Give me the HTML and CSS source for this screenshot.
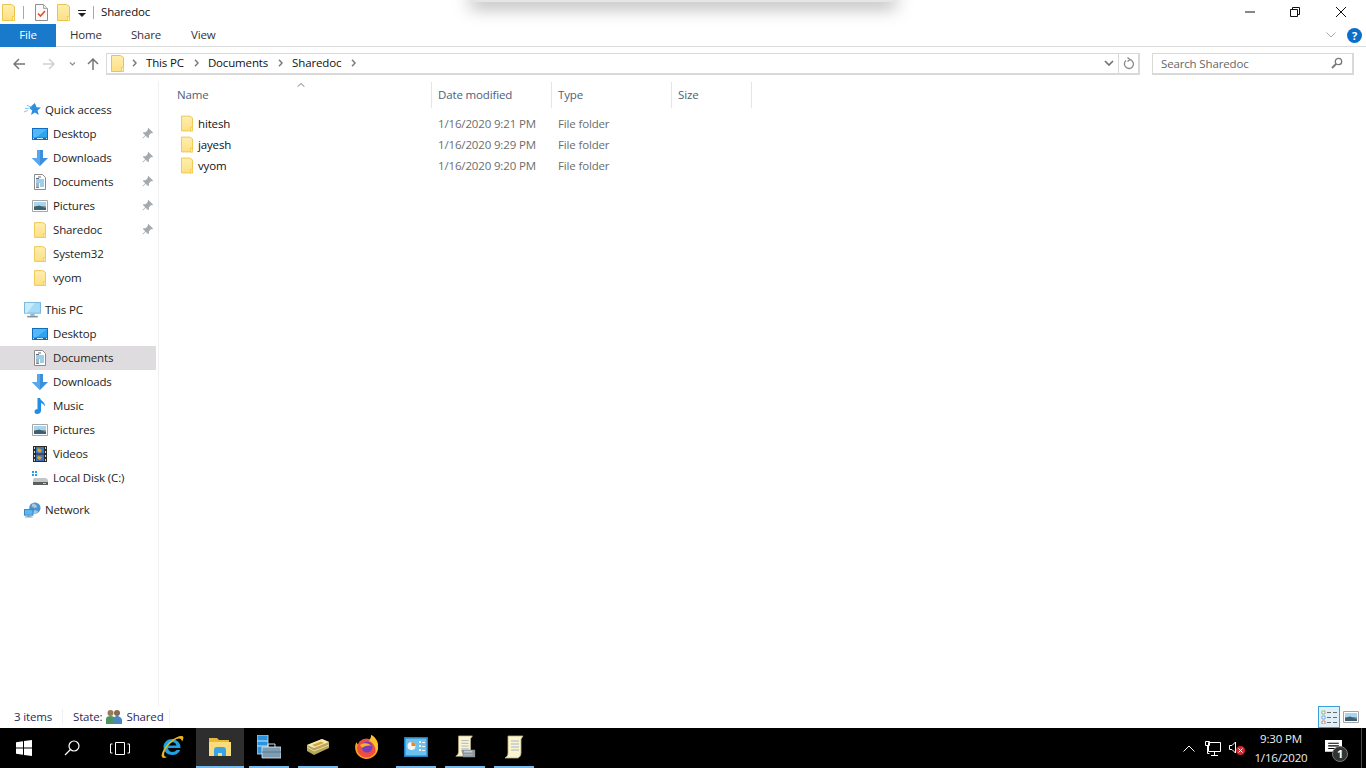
FILE: index.html
```html
<!DOCTYPE html>
<html lang="en">
<head>
    <meta charset="UTF-8">
    <title>Sharedoc</title>
    <link rel="stylesheet" href="styles.css">
</head>
<body>
    <svg class="defs" width="0" height="0">
        <defs>
            <linearGradient id="folderFill" x1="0" y1="0" x2="0" y2="1">
                <stop offset="0" stop-color="#ffeeb0"/>
                <stop offset="1" stop-color="#fde083"/>
            </linearGradient>
            <symbol id="folder" viewBox="0 0 13 17">
                <path d="M.5.5h9l3 2v14H.5z" fill="url(#folderFill)" stroke="#eac44f"/>
                <path d="M10 12h3v5h-3z" fill="#f4cd52"/>
                <path d="M11 13h1v3h-1z" fill="#fff2b8"/>
            </symbol>
            <symbol id="crumb" viewBox="0 0 5 8">
                <path d="M1 .8L4 4 1 7.200" fill="none" stroke="#7c7c7c" stroke-width="1.500"/>
            </symbol>
            <symbol id="star" viewBox="0 0 18 16">
                <path d="M11.500 .5l1.800 4.700 4.700.2-3.700 3 1.300 4.900-4.100-2.700-4.100 2.700 1.300-4.900-3.200-2.600z" fill="#2b8fe0"/>
                <path d="M3 3l5 2M1 6.500h4M0 10l4-1.500" stroke="#7cc0f2" fill="none"/>
            </symbol>
            <symbol id="desktop" viewBox="0 0 16 12">
                <path d="M0 0h16v12H0z" fill="#0f6cbf"/>
                <path d="M1 1h14v8.500H1z" fill="#2ea3f2"/>
                <path d="M1 1h14L4 9.500H1z" fill="#52b8f6"/>
                <path d="M1 10h1v1H1zM5 10h6v1H5zM14 10h1v1h-1z" fill="#d8effc"/>
            </symbol>
            <symbol id="download" viewBox="0 0 16 16">
                <path d="M5 0h6v8h5l-8 8-8-8h5z" fill="#3a8fdf"/>
                <path d="M5 0h3v16L0 8h5z" fill="#5aa8ec"/>
            </symbol>
            <symbol id="document" viewBox="0 0 12 16">
                <path d="M.5.500h8l3 3v12H.5z" fill="#fff" stroke="#8a8a8a"/>
                <path d="M2 6h8M2 8h8M6 10h4M6 12h4M2 13.500h3" stroke="#3f9ad8"/>
                <path d="M4 3h3M2 4.500h3M2 10h3M2 12h3" stroke="#5a6a78"/>
            </symbol>
            <symbol id="picture" viewBox="0 0 16 12">
                <path d="M.5.500h15v11H.5z" fill="#fff" stroke="#a6a6a6"/>
                <path d="M2 2h12v4H2z" fill="#a8d4f2"/>
                <path d="M2 6h12v4H2z" fill="#7e9f92"/>
                <path d="M2 7l5-1.500 7 2.500v2H2z" fill="#3d6172"/>
            </symbol>
            <symbol id="music" viewBox="0 0 11 16">
                <path d="M3 0h2.500c.5 3 5.500 4 5 8.500-1-2-2.500-3-4-3.500v8c0 2-2 3-4 3S0 15 0 13.500 1.500 11 3 11z" fill="#1f8ee6"/>
            </symbol>
            <symbol id="video" viewBox="0 0 14 16">
                <path d="M0 0h14v16H0z" fill="#2a2a2a"/>
                <path d="M1 1h1v2H1zM1 5h1v2H1zM1 9h1v2H1zM1 13h1v2H1zM12 1h1v2h-1zM12 5h1v2h-1zM12 9h1v2h-1zM12 13h1v2h-1z" fill="#d8d8d8"/>
                <path d="M3 1h8v6.500H3z" fill="#3d78b8"/>
                <path d="M3 8.500h8V15H3z" fill="#3e6fc0"/>
                <path d="M5 2l4 2-2 3-3-2zM5 10l4 1-2 3-3-2z" fill="#d9a32e"/>
            </symbol>
            <symbol id="disk" viewBox="0 0 16 14">
                <path d="M0 0h2v2H0zM3 0h2v2H3zM0 3h2v2H0zM3 3h2v2H3z" fill="#2b9cea"/>
                <path d="M2 7h12l2 2v5H1V9z" fill="#c2c6c6"/>
                <path d="M1 11h15v3H1z" fill="#5a5f5f"/>
                <path d="M11 12h3v1h-3z" fill="#a5e38a"/>
            </symbol>
            <symbol id="pc" viewBox="0 0 16 15">
                <path d="M0 0h16v11H0z" fill="#7bb8de"/>
                <path d="M1 1h14v9H1z" fill="#a4dcf8"/>
                <path d="M1 1h9L3 10H1z" fill="#c8ecfc"/>
                <path d="M6 11h4v2H6z" fill="#9eb4c2"/>
                <path d="M3 13h10v1.500H3z" fill="#7c94a4"/>
            </symbol>
            <symbol id="network" viewBox="0 0 18 16">
                <circle cx="11.500" cy="6" r="6" fill="#4b93cf"/>
                <path d="M9 1c3 0 5 2 5 4l-3 1-3-2zM9 11l2-3 4 1-2 3z" fill="#a7c7dd"/>
                <path d="M0 7h10v7H0z" fill="#2f86cf"/>
                <path d="M1 8h8v5H1z" fill="#5db6f2"/>
                <path d="M3 14h4v1h2v1H1v-1h2z" fill="#8aa2b2"/>
            </symbol>
            <symbol id="pin" viewBox="0 0 12 12">
                <path d="M7 0l5 5-1 1-1-.5L7.500 8 7.500 10.500 6.500 11 4 8.500 1 11.500.500 11 3.500 8 1 5.500 1.500 4.500 4 4.500 6.500 2 6 1z" fill="#a4a9ad"/>
            </symbol>
            <symbol id="taskdoc" viewBox="0 0 13 17">
                <path d="M.5.500h8l4 4v12H.5z" fill="#fafafa" stroke="#8e8e8e"/>
                <path d="M8.500.500v4h4" fill="#e6e6e6" stroke="#a8a8a8"/>
                <path d="M3 9.500l2.500 2.500 4.500-5" fill="none" stroke="#e2502a" stroke-width="1.600"/>
            </symbol>
            <symbol id="scroll" viewBox="0 0 20 24">
                <path d="M4 1h15l-2 3v14c0 2-1 4-3 5H1c2-1 3-3 3-5z" fill="#fbf4d0" stroke="#b8ae84" stroke-width=".8"/>
                <path d="M7 6h8M7 9h8M7 12h8M7 15h8" stroke="#a9b2c4"/>
            </symbol>
        </defs>
    </svg>

    <div class="shadow-window"></div>

    <div class="window">
        <div class="titlebar">
            <svg class="ic-folder qa-first"><use href="#folder"/></svg>
            <span class="qa-sep sep-a"></span>
            <svg class="ic-folder qa-check"><use href="#taskdoc"/></svg>
            <svg class="ic-folder qa-folder"><use href="#folder"/></svg>
            <svg class="qa-drop" viewBox="0 0 8 7"><path d="M0 0h8v1H0zM0 3h8L4 7z" fill="#222"/></svg>
            <span class="qa-sep sep-b"></span>
            <span class="title-text">Sharedoc</span>
            <div class="win-controls">
                <span class="win-btn"><svg viewBox="0 0 10 10"><path d="M0 5h10" stroke="#111"/></svg></span>
                <span class="win-btn"><svg viewBox="0 0 10 10"><path d="M.5 2.500h7v7h-7zM2.500 2.500v-2h7v7h-2" fill="none" stroke="#111"/></svg></span>
                <span class="win-btn"><svg viewBox="0 0 10 10"><path d="M0 0l10 10M10 0L0 10" stroke="#111"/></svg></span>
            </div>
        </div>

        <div class="tabs">
            <span class="tab tab-file">File</span>
            <span class="tab tab-home">Home</span>
            <span class="tab tab-share">Share</span>
            <span class="tab tab-view">View</span>
            <svg class="collapse" viewBox="0 0 10 6"><path d="M.5.500L5 5 9.500.500" fill="none" stroke="#a8a8a8"/></svg>
            <span class="help">?</span>
        </div>

        <div class="addressbar">
            <svg class="nav-arrow nav-back" viewBox="0 0 12 12"><path d="M6 1L1 6l5 5M1 6h11" fill="none" stroke="#767676" stroke-width="1.500"/></svg>
            <svg class="nav-arrow nav-forward" viewBox="0 0 12 12"><path d="M6 1l5 5-5 5M11 6H0" fill="none" stroke="#d0d0d0" stroke-width="1.500"/></svg>
            <svg class="nav-drop" viewBox="0 0 6 4"><path d="M.5.500L3 3 5.500.500" fill="none" stroke="#8c8c8c" stroke-width="1.200"/></svg>
            <svg class="nav-arrow nav-up" viewBox="0 0 12 12"><path d="M1 6l5-5 5 5M6 1v11" fill="none" stroke="#767676" stroke-width="1.500"/></svg>
            <div class="address-box">
                <svg class="ic-folder addr-folder"><use href="#folder"/></svg>
                <svg class="crumb-arrow"><use href="#crumb"/></svg><span class="crumb">This PC</span>
                <svg class="crumb-arrow"><use href="#crumb"/></svg><span class="crumb">Documents</span>
                <svg class="crumb-arrow"><use href="#crumb"/></svg><span class="crumb">Sharedoc</span>
                <svg class="crumb-arrow"><use href="#crumb"/></svg>
                <svg class="addr-drop" viewBox="0 0 10 6"><path d="M1 1l4 4 4-4" fill="none" stroke="#6f6f6f" stroke-width="1.600"/></svg>
                <span class="addr-refresh">
                    <svg viewBox="0 0 12 13"><path d="M3 3.500a4.500 4.500 0 1 0 3.500-1M4.500.5l2.500 2-2.500 2" fill="none" stroke="#8a8a8a" stroke-width="1.300"/></svg>
                </span>
            </div>
            <div class="search-box">
                <span>Search Sharedoc</span>
                <svg viewBox="0 0 12 12"><circle cx="7.500" cy="4.500" r="3.200" fill="none" stroke="#777" stroke-width="1.300"/><path d="M5 7l-4 4" stroke="#777" stroke-width="1.800"/></svg>
            </div>
        </div>

        <div class="content">
            <nav class="navpane">
                <div class="nav-row nav-top"><svg class="nav-ic ic-star"><use href="#star"/></svg>Quick access</div>
                <div class="nav-row"><svg class="nav-ic ic-wide"><use href="#desktop"/></svg>Desktop<svg class="pin"><use href="#pin"/></svg></div>
                <div class="nav-row"><svg class="nav-ic ic-wide"><use href="#download"/></svg>Downloads<svg class="pin"><use href="#pin"/></svg></div>
                <div class="nav-row"><svg class="nav-ic ic-doc"><use href="#document"/></svg>Documents<svg class="pin"><use href="#pin"/></svg></div>
                <div class="nav-row"><svg class="nav-ic ic-wide"><use href="#picture"/></svg>Pictures<svg class="pin"><use href="#pin"/></svg></div>
                <div class="nav-row"><svg class="nav-ic ic-navfolder"><use href="#folder"/></svg>Sharedoc<svg class="pin"><use href="#pin"/></svg></div>
                <div class="nav-row"><svg class="nav-ic ic-navfolder"><use href="#folder"/></svg>System32</div>
                <div class="nav-row"><svg class="nav-ic ic-navfolder"><use href="#folder"/></svg>vyom</div>

                <div class="nav-row nav-top nav-group"><svg class="nav-ic ic-star"><use href="#pc"/></svg>This PC</div>
                <div class="nav-row"><svg class="nav-ic ic-wide"><use href="#desktop"/></svg>Desktop</div>
                <div class="nav-row selected"><svg class="nav-ic ic-doc"><use href="#document"/></svg>Documents</div>
                <div class="nav-row"><svg class="nav-ic ic-wide"><use href="#download"/></svg>Downloads</div>
                <div class="nav-row"><svg class="nav-ic ic-wide"><use href="#music"/></svg>Music</div>
                <div class="nav-row"><svg class="nav-ic ic-wide"><use href="#picture"/></svg>Pictures</div>
                <div class="nav-row"><svg class="nav-ic ic-video"><use href="#video"/></svg>Videos</div>
                <div class="nav-row"><svg class="nav-ic ic-wide"><use href="#disk"/></svg>Local Disk (C:)</div>

                <div class="nav-row nav-top nav-group"><svg class="nav-ic ic-star"><use href="#network"/></svg>Network</div>
            </nav>

            <main class="filelist">
                <div class="list-head">
                    <span class="col-name">Name<svg class="sort-caret" viewBox="0 0 8 4"><path d="M.5 3.800L4 .5l3.500 3.300" fill="none" stroke="#7c7c7c"/></svg></span>
                    <span class="col-date">Date modified</span>
                    <span class="col-type">Type</span>
                    <span class="col-size">Size</span>
                </div>
                <div class="file-row">
                    <span class="file-name"><svg class="ic-folder"><use href="#folder"/></svg>hitesh</span>
                    <span class="file-date">1/16/2020 9:21 PM</span>
                    <span class="file-type">File folder</span>
                </div>
                <div class="file-row">
                    <span class="file-name"><svg class="ic-folder"><use href="#folder"/></svg>jayesh</span>
                    <span class="file-date">1/16/2020 9:29 PM</span>
                    <span class="file-type">File folder</span>
                </div>
                <div class="file-row">
                    <span class="file-name"><svg class="ic-folder"><use href="#folder"/></svg>vyom</span>
                    <span class="file-date">1/16/2020 9:20 PM</span>
                    <span class="file-type">File folder</span>
                </div>
            </main>
        </div>

        <div class="statusbar">
            <span class="status-count">3 items</span>
            <span class="status-state">State:
                <svg class="shared-ic" viewBox="0 0 18 15">
                    <circle cx="5.500" cy="4" r="3" fill="#9a7a5c"/><path d="M1 15V10c0-2 2-3 4.500-3S10 8 10 10v5z" fill="#4f9360"/>
                    <circle cx="12" cy="4" r="3" fill="#8a6a4c"/><path d="M8 15v-4c0-2 2-4 4-4s5 2 5 4v4z" fill="#4a86c0"/>
                </svg>
                Shared</span>
            <div class="view-btns">
                <span class="view-btn active">
                    <svg viewBox="0 0 16 14"><path d="M1 1h3v3H1z" fill="#fff" stroke="#7a9a5c" stroke-width=".7"/><path d="M1 6h3v3H1z" fill="#fff" stroke="#4a8ac8" stroke-width=".7"/><path d="M1 11h3v3H1z" fill="#fff" stroke="#d05040" stroke-width=".7"/><path d="M6 2.500h4M12 2.500h4M6 7.500h4M12 7.500h4M6 12.500h4M12 12.500h4" stroke="#6c6c6c"/></svg>
                </span>
                <span class="view-btn"><svg class="view-pic"><use href="#picture"/></svg></span>
            </div>
        </div>

        <footer class="taskbar">
            <span class="tb-sys"><svg class="start" viewBox="0 0 16 16"><path d="M0 2.300l7-1v6.300H0zM8 1.100L16 0v7.600H8zM0 8.400h7v6.300l-7-1zM8 8.400h8V16l-8-1.100z" fill="#fff"/></svg></span>
            <span class="tb-sys"><svg class="glass" viewBox="0 0 16 16"><circle cx="10" cy="6" r="5" fill="none" stroke="#fff" stroke-width="1.200"/><path d="M6.500 9.500L1 15" stroke="#fff" stroke-width="1.300"/></svg></span>
            <span class="tb-sys"><svg class="taskview" viewBox="0 0 20 13"><path d="M5.500.500h9v12h-9zM2.500 2H.5v9h2M17.500 2h2v9h-2" fill="none" stroke="#fff"/></svg></span>
            <span class="tb-app tb-ie">
                <svg viewBox="0 0 24 24">
                    <path d="M12 4a8.500 8.500 0 0 1 8.500 9H8c.3 2.500 2 4 4.500 4 1.800 0 3.200-.8 4-2h3.700c-1.200 3-4.200 5-7.700 5C7.500 20 3.500 16.500 3.500 12S7.500 4 12 4zM8 10.500h8.500C16 8.500 14.500 7.300 12.300 7.300S8.500 8.500 8 10.500z" fill="#1da3e2"/>
                    <path d="M2 22C.500 20 4 11 12 5c4-3 9-5 11-3.500 1 1 0 3.500-1 5-.5-2-1-3-3-3-3 0-7 3-11 7.500C4.500 15.500 3 20 5 21.500c1 .5 2 .5 3 0-2 1.500-5 2-6 .5z" fill="#e9b81f"/>
                </svg>
            </span>
            <span class="tb-app tb-explorer">
                <svg viewBox="0 0 22 20">
                    <path d="M0 1h8l2 2h10v3H0z" fill="#e6b93a"/>
                    <path d="M0 5h22v14H0z" fill="#fbdc7a"/>
                    <path d="M5 13c0-2 1-3 3-3h6c2 0 3 1 3 3v6h-4v-3H9v3H5z" fill="#3aa3e8"/>
                </svg>
            </span>
            <span class="tb-pin first-pin">
                <svg viewBox="0 0 24 24">
                    <path d="M0 0h11v19H0z" fill="#2a93e0" stroke="#cfe6f5" stroke-width=".8"/>
                    <path d="M0 6h11M0 11h11" stroke="#cfe6f5"/>
                    <path d="M5 12h19v11H5z" fill="#7d9db3" stroke="#e4edf2" stroke-width=".8"/>
                    <path d="M11 12V9h7v3" fill="none" stroke="#d4e2ea"/>
                    <path d="M5 17h19" stroke="#587688"/>
                </svg>
            </span>
            <span class="tb-pin">
                <svg viewBox="0 0 24 20">
                    <path d="M1 8L16 2l7 3v6L8 18l-7-4z" fill="#b7a55a"/>
                    <path d="M1 8L16 2l7 3L8 11z" fill="#f6eab0"/>
                    <path d="M6 8l9-3.500 3 1.500-9 3.500z" fill="#d9a53a"/>
                    <path d="M1 10l7 4 15-6" fill="none" stroke="#e8dca0"/>
                </svg>
            </span>
            <span class="tb-pin tb-plain">
                <svg viewBox="0 0 24 24">
                    <path d="M16 0c4 2 7 6 7 11A11.500 11.500 0 1 1 1.500 7C2 9 3 9.500 4 10c1-4 5-5 7-6 0 2 2 3 4 2 1-2 1.500-4 1-6z" fill="#f6a01f"/>
                    <circle cx="11.500" cy="13" r="9.500" fill="#ee4e3f"/>
                    <circle cx="12" cy="12" r="5.500" fill="#7a3fb8"/>
                    <path d="M5 10c4-3 9-2 12 1-4-1-8 0-10 2z" fill="#f7b32b"/>
                    <path d="M16 0c4 2 7 6 7 11 0 3-1 5-2 7 0-6-3-11-7-12 1-2 2.500-4 2-6z" fill="#fbc02d"/>
                </svg>
            </span>
            <span class="tb-pin">
                <svg viewBox="0 0 24 20">
                    <path d="M0 0h24v20H0z" fill="#1d7fc4"/>
                    <path d="M1.500 1.500h21v17h-21z" fill="#6cc2ef"/>
                    <circle cx="7.500" cy="9" r="4" fill="#f5f5f5"/>
                    <path d="M7.500 9V5a4 4 0 0 1 4 4z" fill="#e8862e"/>
                    <path d="M15 4h2v2h-2zM18 5h3v1h-3zM15 8h2v2h-2zM18 9h3v1h-3zM15 12h2v2h-2zM18 13h3v1h-3z" fill="#f5f5f5"/>
                </svg>
            </span>
            <span class="tb-pin">
                <svg viewBox="0 0 22 26">
                    <use href="#scroll" width="20" height="24"/>
                    <path d="M7 16h15v8H9z" fill="#8f979c"/>
                    <path d="M10 17h9v2h-9zM10 21h9v1h-9z" fill="#c6ccd0"/>
                </svg>
            </span>
            <span class="tb-pin">
                <svg viewBox="0 0 20 24"><use href="#scroll"/></svg>
            </span>

            <div class="tray">
                <svg class="tray-up" viewBox="0 0 12 7"><path d="M.5 6.500L6 1l5.500 5.500" fill="none" stroke="#fff"/></svg>
                <svg class="tray-net" viewBox="0 0 16 15"><path d="M3.500 1.500h12v9h-12zM6 14.500h7M9.500 11v3.500M.5.500h4v4h-4zM2.500 4.500v8h2" fill="#000" stroke="#fff"/></svg>
                <span class="tray-vol">
                    <svg viewBox="0 0 16 14"><path d="M.5 4.500h2.500L6.500 1v11L3 8.500H.5z" fill="none" stroke="#fff"/><circle cx="11.500" cy="9.500" r="4.500" fill="#e0232c"/><path d="M9.500 7.500l4 4M13.500 7.500l-4 4" stroke="#fff"/></svg>
                </span>
                <div class="clock"><span>9:30 PM</span><span>1/16/2020</span></div>
                <span class="notif">
                    <svg viewBox="0 0 16 15"><path d="M0 0h16v11h-5l-3 3v-3H0z" fill="#fff"/><path d="M3 3h10M3 5.500h10M3 8h6" stroke="#000"/></svg>
                    <span class="notif-count">1</span>
                </span>
                <span class="show-desktop"></span>
            </div>
        </footer>
    </div>
</body>
</html>
```

FILE: styles.css
```css
* {
    box-sizing: border-box;
}
html, body {
    margin: 0;
    height: 768px;
    overflow: hidden;
    background: #fff;
}
body {
    position: relative;
    font-family: "Open Sans", "Noto Sans", sans-serif;
    font-size: 11.500px;
    letter-spacing: -0.15px;
    color: #111;
}
svg {
    display: block;
    flex: none;
}
.defs {
    position: absolute;
}
.window {
    display: flex;
    flex-direction: column;
    height: 768px;
}
/* window sitting behind, only its bottom edge is showing */
.shadow-window {
    position: absolute;
    top: -10px;
    left: 470px;
    width: 426px;
    height: 12px;
    background: #e6e6e6;
    box-shadow: 0 5px 18px rgba(0, 0, 0, 0.36);
}

/* title bar */
.titlebar {
    display: flex;
    align-items: center;
    height: 24px;
    flex: none;
}
.ic-folder {
    width: 13px;
    height: 17px;
}
.qa-first {
    margin-left: 2px;
}
.qa-sep {
    width: 1px;
    height: 13px;
    background: #a8a8a8;
}
.sep-a {
    margin-left: 8px;
}
.qa-check {
    margin-left: 11px;
}
.qa-folder {
    margin-left: 9px;
}
.qa-drop {
    width: 8px;
    height: 7px;
    margin-left: 8px;
    margin-top: 3px;
}
.sep-b {
    margin-left: 7px;
}
.title-text {
    margin-left: 7px;
    margin-bottom: 2px;
}
.win-controls {
    display: flex;
    margin-left: auto;
    margin-right: 2px;
}
.win-btn {
    display: flex;
    width: 46px;
    height: 22px;
    align-items: center;
    justify-content: center;
}
.win-btn:first-child {
    margin-right: -1px;
}
.win-btn svg {
    width: 10px;
    height: 10px;
}

/* ribbon tabs */
.tabs {
    display: flex;
    align-items: center;
    height: 23px;
    flex: none;
    border-bottom: 1px solid #dadbdc;
}
.tab {
    color: #333;
    margin-bottom: 2px;
}
.tab-file {
    width: 56px;
    height: 23px;
    margin-bottom: 0;
    line-height: 21px;
    text-align: center;
    color: #fff;
    background: #1979ca;
}
.tab-home {
    margin-left: 14px;
}
.tab-share {
    margin-left: 29px;
}
.tab-view {
    margin-left: 30px;
}
.collapse {
    width: 10px;
    height: 6px;
    margin-left: auto;
}
.help {
    width: 15px;
    height: 15px;
    margin: 0 4px 0 11px;
    border-radius: 50%;
    background: #0a6fc9;
    color: #fff;
    font-weight: 700;
    font-size: 11px;
    line-height: 15px;
    text-align: center;
}

/* address bar */
.addressbar {
    display: flex;
    align-items: center;
    height: 34px;
    flex: none;
    padding-bottom: 1px;
}
.nav-arrow {
    width: 12px;
    height: 12px;
}
.nav-back {
    margin-left: 13px;
}
.nav-forward {
    margin-left: 18px;
}
.nav-drop {
    width: 7px;
    height: 4px;
    margin-left: 14px;
}
.nav-up {
    margin-left: 11px;
}
.address-box {
    display: flex;
    align-items: center;
    width: 1034px;
    height: 22px;
    margin-left: 7px;
    border: 1px solid #d9d9d9;
    border-width: 1px 2px 2px 1px;
    color: #111;
}
.addr-folder {
    margin-left: 4px;
}
.crumb {
    margin: 0 10px 2px 9px;
}
.crumb-arrow {
    width: 5px;
    height: 8px;
}
.addr-folder + .crumb-arrow {
    margin-left: 8px;
}
.addr-drop {
    width: 10px;
    height: 6px;
    margin-left: auto;
    margin-right: 4px;
}
.addr-refresh {
    display: flex;
    align-items: center;
    justify-content: center;
    width: 20px;
    height: 100%;
    border-left: 1px solid #d9d9d9;
}
.addr-refresh svg {
    width: 12px;
    height: 13px;
}
.search-box {
    display: flex;
    align-items: center;
    justify-content: space-between;
    width: 202px;
    height: 22px;
    margin-left: 12px;
    padding: 0 9px 0 8px;
    border: 1px solid #d9d9d9;
    border-width: 1px 2px 2px 1px;
    color: #666;
}
.search-box svg {
    width: 12px;
    height: 12px;
}

/* content area */
.content {
    display: flex;
    flex: 1;
    min-height: 0;
}
.navpane {
    width: 159px;
    flex: none;
    padding: 17px 2px 0 0;
    border-right: 1px solid #f0f0f0;
}
.nav-row {
    display: flex;
    align-items: center;
    height: 24px;
    padding-left: 53px;
    padding-bottom: 2px;
    position: relative;
    color: #1d1d1d;
}
.nav-top {
    padding-left: 45px;
}
.nav-group {
    margin-top: 8px;
}
.nav-row.selected {
    background: #dedcde;
}
.nav-ic {
    position: absolute;
    top: 4px;
    left: 32px;
    width: 16px;
    height: 16px;
}
.ic-star {
    left: 24px;
    width: 17px;
}
.ic-doc {
    left: 34px;
    width: 12px;
}
.ic-navfolder {
    left: 34px;
    width: 12px;
}
.ic-video {
    left: 33px;
    width: 14px;
}
.pin {
    position: absolute;
    right: 3px;
    top: 6px;
    width: 11px;
    height: 11px;
}

/* file list */
.filelist {
    flex: 1;
    padding-top: 1px;
}
.list-head {
    display: flex;
    height: 26px;
    margin-bottom: 6px;
    color: #4c607a;
}
.list-head span {
    display: flex;
    align-items: center;
    position: relative;
    height: 26px;
    padding-bottom: 2px;
    border-right: 1px solid #e5e5e5;
}
.col-name {
    width: 273px;
    padding-left: 18px;
}
.col-date {
    width: 120px;
    padding-left: 6px;
}
.col-type {
    width: 120px;
    padding-left: 6px;
}
.col-size {
    width: 80px;
    padding-left: 6px;
}
.sort-caret {
    position: absolute;
    top: 1px;
    left: 138px;
    width: 8px;
    height: 4px;
}
.file-row {
    display: flex;
    align-items: center;
    height: 21px;
    padding-bottom: 2px;
    color: #6d6d6d;
}
.file-name {
    display: flex;
    align-items: center;
    width: 273px;
    padding-left: 22px;
    color: #111;
}
.file-name .ic-folder {
    width: 12px;
    margin-right: 5px;
}
.file-date {
    width: 120px;
    padding-left: 6px;
}
.file-type {
    padding-left: 6px;
}

/* status bar */
.statusbar {
    display: flex;
    align-items: center;
    height: 22px;
    flex: none;
    color: #2b2b5a;
}
.status-count {
    width: 63px;
    margin-bottom: 2px;
    padding-left: 14px;
    border-right: 1px solid #f0f0f0;
}
.status-state {
    display: flex;
    align-items: center;
    gap: 3px;
    width: 107px;
    margin-bottom: 2px;
    padding-left: 10px;
    border-right: 1px solid #f0f0f0;
}
.shared-ic {
    width: 18px;
    height: 15px;
}
.view-btns {
    display: flex;
    margin-left: auto;
    margin-right: 4px;
}
.view-btn {
    display: flex;
    align-items: center;
    justify-content: center;
    width: 22px;
    height: 22px;
}
.view-btn.active {
    background: #dff0fb;
    border: 1px solid #3aa0dc;
}
.view-btn svg {
    width: 16px;
    height: 14px;
}
.view-btn .view-pic {
    height: 12px;
}

/* taskbar */
.taskbar {
    display: flex;
    align-items: stretch;
    height: 40px;
    flex: none;
    background: #000;
    color: #fff;
}
.tb-sys {
    display: flex;
    align-items: center;
    justify-content: center;
    width: 48px;
}
.start {
    width: 16px;
    height: 16px;
}
.glass {
    width: 16px;
    height: 16px;
}
.taskview {
    width: 20px;
    height: 13px;
}
.tb-app {
    display: flex;
    align-items: center;
    justify-content: center;
    width: 48px;
    border-bottom: 2px solid transparent;
}
.tb-ie {
    margin-left: 4px;
}
.tb-ie svg {
    width: 24px;
    height: 24px;
}
.tb-explorer {
    background: #2e2e2e;
    border-bottom-color: #76b9ed;
}
.tb-explorer svg {
    width: 22px;
    height: 20px;
}
.tb-pin {
    display: flex;
    align-items: center;
    justify-content: center;
    width: 40px;
    margin-left: 9px;
    border-bottom: 2px solid #76b9ed;
}
.first-pin {
    margin-left: 5px;
}
.tb-pin svg {
    width: 24px;
    height: 24px;
}
.tb-plain {
    border-bottom-color: transparent;
}
.tray {
    display: flex;
    align-items: center;
    margin-left: auto;
}
.tray-up {
    width: 12px;
    height: 7px;
}
.tray-net {
    width: 16px;
    height: 15px;
    margin-left: 10px;
}
.tray-vol {
    margin-left: 8px;
}
.tray-vol svg {
    width: 16px;
    height: 14px;
}
.clock {
    display: flex;
    flex-direction: column;
    align-items: center;
    width: 54px;
    margin-left: 9px;
    line-height: 19px;
    font-size: 11.500px;
    color: #eee;
}
.notif {
    position: relative;
    width: 20px;
    margin-left: 17px;
}
.notif svg {
    width: 17px;
    height: 16px;
}
.notif-count {
    position: absolute;
    top: 6px;
    left: 7px;
    width: 16px;
    height: 16px;
    border-radius: 50%;
    border: 1px solid #777;
    background: #333;
    font-size: 11px;
    font-weight: 700;
    line-height: 14px;
    text-align: center;
}
.show-desktop {
    width: 1px;
    height: 40px;
    margin-left: 16px;
    margin-right: 4px;
    background: #4a4a4a;
}
```
